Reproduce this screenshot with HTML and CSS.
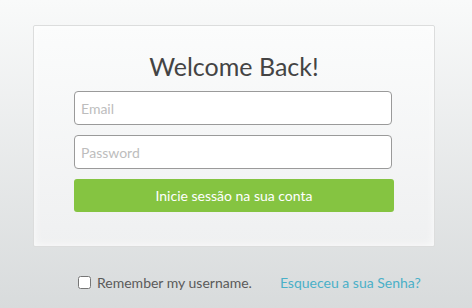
FILE: index.html
```html
<!DOCTYPE html>
<html lang="en">
<head>
    <meta charset="UTF-8">
    <title>Login</title>
    <link rel="stylesheet" href="styles.css">
</head>
<body>
    <div class="login-box">
        <h1>Welcome Back!</h1>
        <form class="login-form">
            <input type="text" class="field" placeholder="Email">
            <input type="password" class="field" placeholder="Password">
            <button type="button" class="login-button">Inicie sessão na sua conta</button>
        </form>
    </div>
    <div class="extras">
        <label class="remember">
            <input type="checkbox" class="remember-check">
            <span>Remember my username.</span>
        </label>
        <a href="#" class="forgot">Esqueceu a sua Senha?</a>
    </div>
</body>
</html>
```

FILE: styles.css
```css
html {
    height: 100%;
}
body {
    margin: 0;
    min-height: 100%;
    font-family: 'Lato', 'Liberation Sans', sans-serif;
    background: linear-gradient(#f9fafa, #d8dbdc);
    padding-top: 25px;
    box-sizing: border-box;
}
.login-box {
    width: 402px;
    margin-left: 33px;
    box-sizing: border-box;
    border: 1px solid #dcdddd;
    border-radius: 2px;
    background: linear-gradient(#fbfcfc, #eff0f1);
    box-shadow: inset 0 0 10px rgba(255, 255, 255, 0.8);
    padding: 25px 40px 34px;
}
.login-box h1 {
    margin: 0 0 10px;
    font-weight: normal;
    font-size: 25px;
    line-height: 30px;
    color: #444;
    text-align: center;
}
.login-form {
    display: flex;
    flex-direction: column;
    align-items: flex-start;
    gap: 10px;
}
.field {
    width: 318px;
    height: 34px;
    box-sizing: border-box;
    border: 1px solid #9a9a9a;
    border-radius: 4px;
    padding: 0 6px;
    font-family: inherit;
    font-size: 14px;
    color: #333;
    background: #fff;
    outline: none;
}
.field::placeholder {
    color: #bdbdbd;
}
.login-button {
    width: 320px;
    height: 33px;
    border: none;
    border-radius: 3px;
    background-color: #85c441;
    color: #fff;
    font-family: inherit;
    font-size: 14px;
    cursor: pointer;
}
.extras {
    display: flex;
    align-items: center;
    margin: 27px 0 0 78px;
    font-size: 14px;
}
.remember {
    display: flex;
    align-items: center;
    gap: 6px;
    color: #5a5a5a;
}
.remember-check {
    width: 13px;
    height: 13px;
    margin: 0;
}
.forgot {
    margin-left: 28px;
    color: #4ab0c8;
    text-decoration: none;
}
```
